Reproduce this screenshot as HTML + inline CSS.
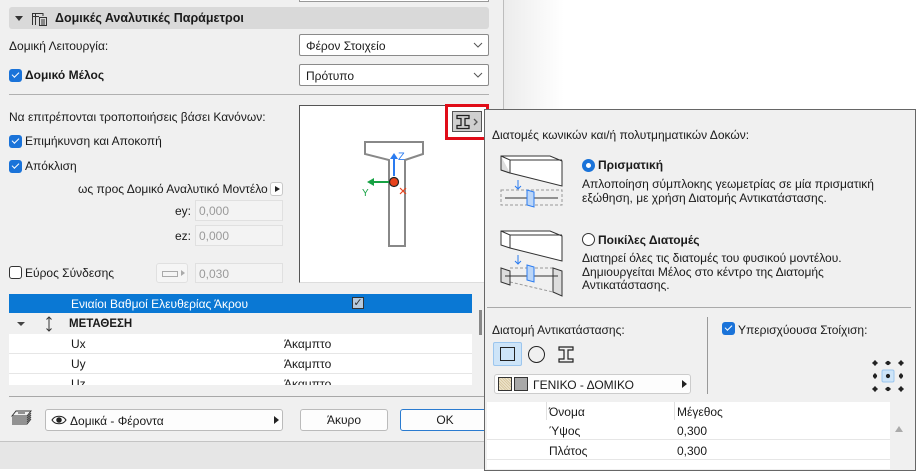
<!DOCTYPE html>
<html><head><meta charset="utf-8"><style>
*{box-sizing:border-box;margin:0;padding:0}
body{width:921px;height:469px;overflow:hidden;position:relative;background:#fff;font-family:"Liberation Sans","DejaVu Sans",sans-serif;font-size:12px;color:#1a1a1a}
.a{position:absolute;white-space:nowrap}
.cb{position:absolute;width:13px;height:13px;border-radius:3px;background:#1a73d9}
.cb::after{content:"";position:absolute;left:3px;top:3px;width:6px;height:3px;border-left:1.3px solid #fff;border-bottom:1.3px solid #fff;transform:rotate(-45deg)}
.dd{position:absolute;background:#fff;border:1px solid #8a8a8a;border-radius:2px}
.fld{position:absolute;background:#f3f3f3;border:1px solid #e0e0e0;color:#9a9a9a;padding:3px 3px}
.btn{position:absolute;background:#fdfdfd;border:1px solid #c8c8c8;border-radius:3px;text-align:center}
</style></head><body>
<div class="a" style="left:504px;top:0;width:60px;height:109px;background:linear-gradient(90deg,#ececec,#fff)"></div>
<div class="a" style="left:0;top:0;width:504px;height:441px;background:#f0f0f0;border-right:1px solid #bdbdbd"></div>
<div class="a" style="left:0;top:441px;width:484px;height:28px;background:#e6e6e6;border-top:1px solid #c4c4c4"></div>
<div class="a" style="left:299px;top:0;width:190px;height:2px;border:1px solid #999;border-top:none;background:#fff"></div>
<div class="a" style="left:9px;top:7px;width:480px;height:22px;background:#d9d9d9;border-radius:3px"></div>
<div class="a" style="left:15px;top:16px;border-left:4px solid transparent;border-right:4px solid transparent;border-top:5px solid #333"></div>
<svg class="a" style="left:31px;top:11px" width="17" height="15" viewBox="0 0 17 15" fill="none" stroke="#333" stroke-width="1"><path d="M1.5 14V2.5H12V5M1.5 5.5H8M4.5 2.5v11.5"/><rect x="8.5" y="6.5" width="7" height="8"/><path d="M10 9h4M10 11h4M10 13h4"/></svg>
<div class="a" style="left:55px;top:11px;font-weight:bold;font-size:12.5px">Δομικές Αναλυτικές Παράμετροι</div>
<div class="a" style="left:9px;top:39px">Δομική Λειτουργία:</div>
<div class="dd" style="left:299px;top:34px;width:190px;height:22px"><span class="a" style="left:6px;top:4px">Φέρον Στοιχείο</span><svg class="a" style="right:5px;top:7px" width="10" height="6" viewBox="0 0 10 6" fill="none" stroke="#555" stroke-width="1"><path d="M1 1l4 4 4-4"/></svg></div>
<div class="cb" style="left:9px;top:69px"></div>
<div class="a" style="left:25px;top:68px;font-weight:bold">Δομικό Μέλος</div>
<div class="dd" style="left:299px;top:64px;width:190px;height:22px"><span class="a" style="left:6px;top:4px">Πρότυπο</span><svg class="a" style="right:5px;top:7px" width="10" height="6" viewBox="0 0 10 6" fill="none" stroke="#555" stroke-width="1"><path d="M1 1l4 4 4-4"/></svg></div>
<div class="a" style="left:9px;top:94px;width:480px;height:1px;background:#b0b0b0"></div>
<div class="a" style="left:9px;top:110px">Να επιτρέπονται τροποποιήσεις βάσει Κανόνων:</div>
<div class="cb" style="left:9px;top:135px"></div><div class="a" style="left:25px;top:134px">Επιμήκυνση και Αποκοπή</div>
<div class="cb" style="left:9px;top:160px"></div><div class="a" style="left:25px;top:159px">Απόκλιση</div>
<div class="a" style="left:78px;top:182px">ως προς Δομικό Αναλυτικό Μοντέλο</div>
<div class="btn" style="left:270px;top:182px;width:13px;height:14px"><span class="a" style="left:4px;top:3px;border-top:3.5px solid transparent;border-bottom:3.5px solid transparent;border-left:5px solid #222"></span></div>
<div class="a" style="left:175px;top:204px">ey:</div><div class="fld" style="left:195px;top:200px;width:88px;height:21px">0,000</div>
<div class="a" style="left:175px;top:229px">ez:</div><div class="fld" style="left:195px;top:225px;width:88px;height:21px">0,000</div>
<div class="a" style="left:9px;top:266px;width:13px;height:13px;border:1px solid #333;border-radius:3px;background:#fff"></div>
<div class="a" style="left:25px;top:266px">Εύρος Σύνδεσης</div>
<div class="btn" style="left:156px;top:263px;width:32px;height:20px;background:#f5f5f5;border-color:#e0e0e0"><span class="a" style="left:5px;top:7px;width:16px;height:6px;border:1px solid #aaa"></span><span class="a" style="left:24px;top:6px;border-top:3.5px solid transparent;border-bottom:3.5px solid transparent;border-left:4px solid #aaa"></span></div>
<div class="fld" style="left:195px;top:263px;width:88px;height:20px">0,030</div>
<div class="a" style="left:299px;top:105px;width:190px;height:178px;background:#fff;border:1px solid #555;border-bottom:1px solid #ddd"></div>
<svg class="a" style="left:355px;top:138px" width="80" height="110" viewBox="355 138 80 110" fill="none"><path d="M365 142h58v12l-18 6v86h-16v-86l-24-6z" stroke="#888" stroke-width="2"/><path d="M394 176v-20" stroke="#2a7bf0" stroke-width="2"/><path d="M390 159l4-6 4 6z" fill="#2a7bf0"/><text x="398" y="160" font-size="11" fill="#2a7bf0" font-family="Liberation Sans">Z</text><path d="M392 182h-20" stroke="#17a244" stroke-width="2"/><path d="M374 178l-7 4 7 4z" fill="#17a244"/><text x="362" y="196" font-size="10" fill="#17a244" font-family="Liberation Sans">Y</text><circle cx="394" cy="182" r="4.5" fill="#e8431c" stroke="#222" stroke-width="1.2"/><path d="M400 188l6 6M406 188l-6 6" stroke="#e8431c" stroke-width="1.2"/></svg>
<div class="a" style="left:445px;top:104px;width:44px;height:36px;border:3px solid #e00c18"></div>
<div class="a" style="left:452px;top:111px;width:30px;height:21px;background:#cfcfcf;border:1px solid #555"></div>
<svg class="a" style="left:456px;top:114px" width="24" height="16" viewBox="0 0 24 16" fill="none" stroke="#222" stroke-width="1.3"><path d="M1 1.5h12v3H9v7h4v3H1v-3h4v-7H1z"/><path d="M18 5l3 3-3 3" stroke="#555"/></svg>
<div class="a" style="left:9px;top:294px;width:463px;height:19px;background:#0a78d4"></div>
<div class="a" style="left:71px;top:297px;color:#fff">Ενιαίοι Βαθμοί Ελευθερίας Άκρου</div>
<div class="a" style="left:352px;top:297px;width:12px;height:12px;border:1px solid #333;background:#b6c9dc;font-size:11px;line-height:10px;text-align:center;color:#333">✓</div>
<div class="a" style="left:9px;top:313px;width:463px;height:21px;background:#f0f0f0"></div>
<div class="a" style="left:17px;top:322px;border-left:4px solid transparent;border-right:4px solid transparent;border-top:4px solid #444"></div>
<svg class="a" style="left:45px;top:316px" width="8" height="16" viewBox="0 0 8 16" fill="none" stroke="#333" stroke-width="1"><path d="M4 1v14M1.5 3.5L4 1l2.5 2.5M1.5 12.5L4 15l2.5-2.5"/></svg>
<div class="a" style="left:69px;top:318px;font-weight:bold;font-size:11.5px">ΜΕΤΑΘΕΣΗ</div>
<div class="a" style="left:9px;top:334px;width:463px;height:51px;background:#fff;overflow:hidden">
<div class="a" style="left:0;top:19px;width:463px;height:1px;background:#e6e6e6"></div>
<div class="a" style="left:0;top:39px;width:463px;height:1px;background:#e6e6e6"></div>
<div class="a" style="left:62px;top:3px">Ux</div><div class="a" style="left:275px;top:3px">Άκαμπτο</div>
<div class="a" style="left:62px;top:23px">Uy</div><div class="a" style="left:275px;top:23px">Άκαμπτο</div>
<div class="a" style="left:62px;top:43px">Uz</div><div class="a" style="left:275px;top:43px">Άκαμπτο</div>
</div>
<div class="a" style="left:479px;top:310px;width:3px;height:25px;background:#888"></div>
<div class="a" style="left:9px;top:396px;width:475px;height:1px;background:#a8a8a8"></div>
<svg class="a" style="left:11px;top:409px" width="21" height="19" viewBox="0 0 21 19" fill="none" stroke="#333" stroke-width="1"><path d="M5 2h15l-4 5H1z"/><path d="M1 9h15l4-5M1 11h15l4-5M1 13h15l4-5M1 15h15l4-5"/><path d="M7 4h7"/></svg>
<div class="btn" style="left:45px;top:409px;width:238px;height:22px;border-color:#bbb"><svg class="a" style="left:5px;top:5px" width="16" height="10" viewBox="0 0 16 10" fill="none" stroke="#222" stroke-width="1.1"><path d="M1 5C4 0 12 0 15 5C12 10 4 10 1 5z"/><circle cx="8" cy="5" r="2.2" fill="#222"/></svg><span class="a" style="left:24px;top:4px">Δομικά - Φέροντα</span><span class="a" style="right:3px;top:6px;border-top:4px solid transparent;border-bottom:4px solid transparent;border-left:5px solid #222"></span></div>
<div class="btn" style="left:300px;top:409px;width:88px;height:22px;border-color:#bbb;line-height:20px">Άκυρο</div>
<div class="btn" style="left:400px;top:409px;width:90px;height:22px;border-color:#2a7bd0;line-height:20px">OK</div>
<div class="a" style="left:484px;top:109px;width:432px;height:362px;background:#f0f0f0;border:1px solid #666"></div>
<div class="a" style="left:492px;top:128px">Διατομές κωνικών και/ή πολυτμηματικών Δοκών:</div>
<svg class="a" style="left:498px;top:153px" width="68" height="148" viewBox="498 153 68 148" fill="none" stroke="#333" stroke-width="1"><path d="M501 156h49l12 5v25l-52-13-9-3z" fill="#fff"/><path d="M501 156l9 4h52M510 160v13" /><path d="M501 156v14l9 3" fill="#ddd"/><path d="M518 180v9M515 186l3 3 3-3" stroke="#2a7bf0"/><rect x="501" y="190" width="61" height="15" stroke="#999" stroke-dasharray="3 2"/><path d="M505 198h53"/><path d="M527 190l7 2v15l-7-2z" fill="#bcd6f7" stroke="#2a7bf0"/><path d="M501 231h49l12 5v25l-52-13-9-3z" fill="#fff"/><path d="M501 231l9 4h52M510 235v13"/><path d="M518 255v9M515 261l3 3 3-3" stroke="#2a7bf0"/><path d="M510 268h43M510 282l43 10" stroke="#999" stroke-dasharray="3 2"/><path d="M501 268l9 3v14l-9-3z" fill="#ddd"/><path d="M553 268l9 3v25l-9-4z" fill="#ddd"/><path d="M505 276h53"/><path d="M527 265l7 2v15l-7-2z" fill="#bcd6f7" stroke="#2a7bf0"/></svg>
<div class="a" style="left:582px;top:159px;width:13px;height:13px;border-radius:50%;border:4px solid #1a73d9;background:#fff"></div>
<div class="a" style="left:598px;top:158px;font-weight:bold">Πρισματική</div>
<div class="a" style="left:582px;top:178px;line-height:13.5px">Απλοποίηση σύμπλοκης γεωμετρίας σε μία πρισματική<br>εξώθηση, με χρήση Διατομής Αντικατάστασης.</div>
<div class="a" style="left:582px;top:233px;width:13px;height:13px;border-radius:50%;border:1px solid #333;background:#fff"></div>
<div class="a" style="left:598px;top:233px;font-weight:bold">Ποικίλες Διατομές</div>
<div class="a" style="left:582px;top:252px;line-height:13.5px">Διατηρεί όλες τις διατομές του φυσικού μοντέλου.<br>Δημιουργείται Μέλος στο κέντρο της Διατομής<br>Αντικατάστασης.</div>
<div class="a" style="left:487px;top:307px;width:424px;height:1px;background:#aaa"></div>
<div class="a" style="left:707px;top:317px;width:1px;height:77px;background:#999"></div>
<div class="a" style="left:492px;top:323px">Διατομή Αντικατάστασης:</div>
<div class="a" style="left:493px;top:342px;width:29px;height:24px;background:#cde4f8;border:1px solid #9cc6ee;border-radius:2px"></div>
<div class="a" style="left:500px;top:347px;width:15px;height:14px;border:1.3px solid #222"></div>
<div class="a" style="left:528px;top:346px;width:17px;height:17px;border:1.3px solid #222;border-radius:50%"></div>
<svg class="a" style="left:558px;top:346px" width="17" height="17" viewBox="0 0 17 17" fill="none" stroke="#222" stroke-width="1.2"><path d="M1 1h14v3h-5v9h5v3H1v-3h5V4H1z"/></svg>
<div class="btn" style="left:494px;top:374px;width:197px;height:20px;border-color:#ccc"><span class="a" style="left:3px;top:2px;width:14px;height:14px;border:1px solid #333;background:repeating-linear-gradient(45deg,#d9c9a3 0 1px,#efe6cf 1px 2px)"></span><span class="a" style="left:19px;top:2px;width:14px;height:14px;border:1px solid #333;background:#a8a8a8"></span><span class="a" style="left:38px;top:3px">ΓΕΝΙΚΟ - ΔΟΜΙΚΟ</span><span class="a" style="right:3px;top:5px;border-top:4px solid transparent;border-bottom:4px solid transparent;border-left:5px solid #222"></span></div>
<div class="cb" style="left:722px;top:322px"></div>
<div class="a" style="left:738px;top:323px">Υπερισχύουσα Στοίχιση:</div>
<svg class="a" style="left:870px;top:358px" width="36" height="36" viewBox="0 0 36 36" fill="#222" stroke="#222" stroke-width="1"><rect x="12" y="12" width="12" height="12" fill="#cde4f8" stroke="#9cc6ee" rx="1.5"/><g><circle cx="5" cy="5" r="1.6"/><circle cx="18" cy="5" r="1.6"/><circle cx="31" cy="5" r="1.6"/><circle cx="5" cy="18" r="1.6"/><circle cx="18" cy="18" r="1.6"/><circle cx="31" cy="18" r="1.6"/><circle cx="5" cy="31" r="1.6"/><circle cx="18" cy="31" r="1.6"/><circle cx="31" cy="31" r="1.6"/></g><path d="M2 5h6M15 5h6M28 5h6M5 2v6M31 2v6M5 15v6M31 15v6M2 31h6M15 31h6M28 31h6M5 28v6M31 28v6"/></svg>
<div class="a" style="left:487px;top:402px;width:403px;height:67px;background:#fff"></div>
<div class="a" style="left:546px;top:402px;width:1px;height:18px;background:#e0e0e0"></div>
<div class="a" style="left:674px;top:402px;width:1px;height:18px;background:#e0e0e0"></div>
<div class="a" style="left:549px;top:405px">Όνομα</div><div class="a" style="left:677px;top:405px">Μέγεθος</div>
<div class="a" style="left:487px;top:439px;width:403px;height:1px;background:#e6e6e6"></div>
<div class="a" style="left:487px;top:459px;width:403px;height:1px;background:#e6e6e6"></div>
<div class="a" style="left:549px;top:424px">Ύψος</div><div class="a" style="left:677px;top:424px">0,300</div>
<div class="a" style="left:549px;top:444px">Πλάτος</div><div class="a" style="left:677px;top:444px">0,300</div>
<div class="a" style="left:895px;top:426px;border-left:4.5px solid transparent;border-right:4.5px solid transparent;border-bottom:6px solid #aaa"></div>
</body></html>
